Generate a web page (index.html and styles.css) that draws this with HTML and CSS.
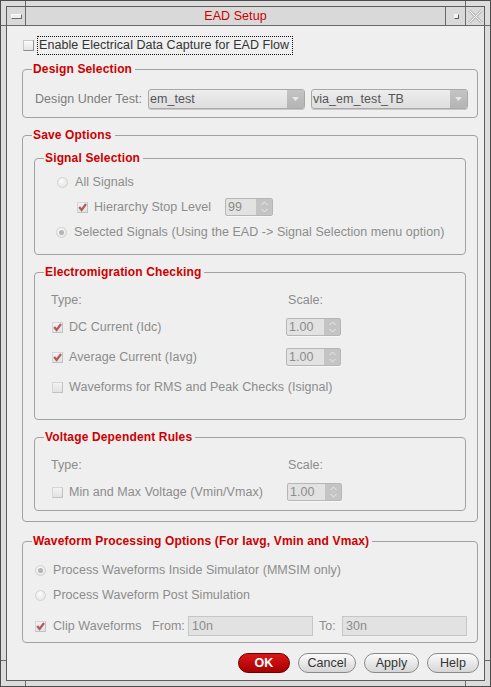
FILE: index.html
```html
<!DOCTYPE html>
<html>
<head>
<meta charset="utf-8">
<title>EAD Setup</title>
<link rel="stylesheet" href="styles.css">
</head>
<body>
<div class="win">
  <span class="notch notch-t1"></span><span class="notch notch-t2"></span>
  <span class="notch notch-b1"></span><span class="notch notch-b2"></span>
  <span class="notch notch-l1"></span><span class="notch notch-l2"></span>
  <span class="notch notch-r1"></span><span class="notch notch-r2"></span>
  <div class="inner">
    <div class="titlebar">
      <div class="tb-btn tb-menu"><span class="menu-bar"></span></div>
      <div class="tb-title">EAD Setup</div>
      <div class="tb-btn tb-min"><span class="min-sq"></span></div>
      <div class="tb-btn tb-close">
        <svg width="15" height="15" viewBox="0 0 15 15"><path d="M1.5 1.5 L13.5 13.5 M13.5 1.5 L1.5 13.5" stroke="#bdbdbd" stroke-width="3" fill="none"/><path d="M1.5 1.5 L13.5 13.5 M13.5 1.5 L1.5 13.5" stroke="#f4f4f4" stroke-width="1" fill="none"/></svg>
      </div>
    </div>
    <div class="content">
      <div class="enable-row">
        <span class="cb cb-on"></span>
        <span class="focus">Enable Electrical Data Capture for EAD Flow</span>
      </div>

      <fieldset class="group g-design">
        <legend>Design Selection</legend>
        <div class="design-row">
          <span class="lbl-dut">Design Under Test:</span>
          <span class="combo"><span class="combo-val">em_test</span><span class="combo-arr"><svg width="7" height="4" viewBox="0 0 7 4"><path d="M0 0 L7 0 L3.5 4 Z" fill="#e8e8e8"/></svg></span></span>
          <span class="combo"><span class="combo-val">via_em_test_TB</span><span class="combo-arr"><svg width="7" height="4" viewBox="0 0 7 4"><path d="M0 0 L7 0 L3.5 4 Z" fill="#e8e8e8"/></svg></span></span>
        </div>
      </fieldset>

      <fieldset class="group g-save">
        <legend>Save Options</legend>

        <fieldset class="subgroup g-signal">
          <legend>Signal Selection</legend>
          <div class="row sig-row1">
            <span class="radio"></span><span class="dis">All Signals</span>
          </div>
          <div class="row sig-row2">
            <span class="cb"><svg class="chk" width="11" height="11" viewBox="0 0 11 11"><path d="M2.2 5 L4.6 8 L9 2" stroke="#b45a5a" stroke-width="2.2" fill="none"/></svg></span>
            <span class="dis hier-lbl">Hierarchy Stop Level</span>
            <span class="spin spin-h"><span class="spin-val">99</span><span class="spin-arr"><svg width="9" height="14" viewBox="0 0 9 14"><path d="M1.5 5 L4.5 2 L7.5 5" stroke="#ececec" stroke-width="1" fill="none"/><path d="M1.5 9 L4.5 12 L7.5 9" stroke="#ececec" stroke-width="1" fill="none"/></svg></span></span>
          </div>
          <div class="row sig-row3">
            <span class="radio radio-on"></span><span class="dis">Selected Signals (Using the EAD -&gt; Signal Selection menu option)</span>
          </div>
        </fieldset>

        <fieldset class="subgroup g-em">
          <legend>Electromigration Checking</legend>
          <div class="row em-head">
            <span class="col1 dis">Type:</span><span class="dis scale-lbl">Scale:</span>
          </div>
          <div class="row em-r1">
            <span class="col1 cbcell"><span class="cb"><svg class="chk" width="11" height="11" viewBox="0 0 11 11"><path d="M2.2 5 L4.6 8 L9 2" stroke="#b45a5a" stroke-width="2.2" fill="none"/></svg></span><span class="dis">DC Current (Idc)</span></span>
            <span class="spin"><span class="spin-val">1.00</span><span class="spin-arr"><svg width="9" height="14" viewBox="0 0 9 14"><path d="M1.5 5 L4.5 2 L7.5 5" stroke="#ececec" stroke-width="1" fill="none"/><path d="M1.5 9 L4.5 12 L7.5 9" stroke="#ececec" stroke-width="1" fill="none"/></svg></span></span>
          </div>
          <div class="row em-r2">
            <span class="col1 cbcell"><span class="cb"><svg class="chk" width="11" height="11" viewBox="0 0 11 11"><path d="M2.2 5 L4.6 8 L9 2" stroke="#b45a5a" stroke-width="2.2" fill="none"/></svg></span><span class="dis">Average Current (Iavg)</span></span>
            <span class="spin"><span class="spin-val">1.00</span><span class="spin-arr"><svg width="9" height="14" viewBox="0 0 9 14"><path d="M1.5 5 L4.5 2 L7.5 5" stroke="#ececec" stroke-width="1" fill="none"/><path d="M1.5 9 L4.5 12 L7.5 9" stroke="#ececec" stroke-width="1" fill="none"/></svg></span></span>
          </div>
          <div class="row em-r3">
            <span class="col1 cbcell wide"><span class="cb"></span><span class="dis">Waveforms for RMS and Peak Checks (Isignal)</span></span>
          </div>
        </fieldset>

        <fieldset class="subgroup g-vdr">
          <legend>Voltage Dependent Rules</legend>
          <div class="row vdr-head">
            <span class="col1 dis">Type:</span><span class="dis scale-lbl">Scale:</span>
          </div>
          <div class="row vdr-r1">
            <span class="col1 cbcell"><span class="cb"></span><span class="dis">Min and Max Voltage (Vmin/Vmax)</span></span>
            <span class="spin spin-v"><span class="spin-val">1.00</span><span class="spin-arr"><svg width="9" height="14" viewBox="0 0 9 14"><path d="M1.5 5 L4.5 2 L7.5 5" stroke="#ececec" stroke-width="1" fill="none"/><path d="M1.5 9 L4.5 12 L7.5 9" stroke="#ececec" stroke-width="1" fill="none"/></svg></span></span>
          </div>
        </fieldset>
      </fieldset>

      <fieldset class="group g-wpo">
        <legend>Waveform Processing Options (For Iavg, Vmin and Vmax)</legend>
        <div class="row wpo-r1">
          <span class="radio radio-on"></span><span class="dis">Process Waveforms Inside Simulator (MMSIM only)</span>
        </div>
        <div class="row wpo-r2">
          <span class="radio"></span><span class="dis">Process Waveform Post Simulation</span>
        </div>
        <div class="row wpo-r3">
          <span class="cb"><svg class="chk" width="11" height="11" viewBox="0 0 11 11"><path d="M2.2 5 L4.6 8 L9 2" stroke="#b45a5a" stroke-width="2.2" fill="none"/></svg></span>
          <span class="dis clip-lbl">Clip Waveforms</span>
          <span class="dis from-lbl">From:</span>
          <span class="field">10n</span>
          <span class="dis to-lbl">To:</span>
          <span class="field">30n</span>
        </div>
      </fieldset>

      <div class="buttons">
        <span class="btn btn-ok">OK</span>
        <span class="btn btn-cancel">Cancel</span>
        <span class="btn btn-apply">Apply</span>
        <span class="btn btn-help">Help</span>
      </div>
    </div>
  </div>
</div>
</body>
</html>
```

FILE: styles.css
```css
* { box-sizing: border-box; }
html, body { margin: 0; padding: 0; background: #efefef; }
body {
  font-family: "Liberation Sans", Arial, Helvetica, sans-serif;
  font-size: 12.5px;
  letter-spacing: 0.05px;
  color: #333;
}

.win {
  position: relative;
  width: 491px;
  height: 687px;
  border: 1px solid #4c4c4c;
  background: #dcdcdc;
  padding: 5px;
}
.notch { position: absolute; background: #6a6a6a; }
.notch-t1 { left: 24px; top: 0; width: 1px; height: 5px; }
.notch-t2 { left: 464px; top: 0; width: 1px; height: 5px; }
.notch-b1 { left: 24px; bottom: 0; width: 1px; height: 5px; }
.notch-b2 { left: 464px; bottom: 0; width: 1px; height: 5px; }
.notch-l1 { left: 0; top: 24px; width: 5px; height: 1px; }
.notch-l2 { left: 0; top: 659px; width: 5px; height: 1px; }
.notch-r1 { right: 0; top: 24px; width: 5px; height: 1px; }
.notch-r2 { right: 0; top: 659px; width: 5px; height: 1px; }

.inner {
  height: 100%;
  border: 1px solid #5c5c5c;
  background: #efefef;
  display: flex;
  flex-direction: column;
}

/* title bar */
.titlebar {
  height: 19px;
  flex: none;
  display: flex;
  background: #d9d9d9;
  border-bottom: 1px solid #6a6a6a;
}
.tb-btn { display: flex; align-items: center; justify-content: center; height: 18px; }
.tb-menu { width: 19px; border-right: 1px solid #6a6a6a; }
.menu-bar {
  width: 11px; height: 5px;
  background: #efefef;
  border: 1px solid;
  border-color: #fafafa #6a6a6a #6a6a6a #fafafa;
}
.tb-title {
  flex: 1;
  text-align: center;
  color: #cc0000;
  line-height: 18px;
  font-size: 12.5px;
}
.tb-min { width: 20px; border-left: 1px solid #6a6a6a; }
.min-sq {
  width: 5px; height: 5px;
  background: #f2f2f2;
  border: 1px solid;
  border-color: #f8f8f8 #5a5a5a #5a5a5a #f8f8f8;
  margin-left: 1px;
}
.tb-close { width: 19px; border-left: 1px solid #6a6a6a; }

/* content */
.content {
  flex: 1;
  display: flex;
  flex-direction: column;
}

.enable-row {
  margin-top: 10px;
  height: 19px;
  display: flex;
  align-items: center;
  padding-left: 16px;
}
.focus {
  margin-left: 3px;
  height: 19px;
  line-height: 17px;
  border: 1px dotted #111;
  padding: 0 3px 0 1px;
  color: #333;
}

/* checkbox / radio */
.cb {
  flex: none;
  position: relative;
  width: 11px;
  height: 11px;
  border: 1px solid;
  border-color: #d6d6d6 #c2c2c2 #c2c2c2 #d6d6d6;
  background: linear-gradient(#f2f2f2, #e2e2e2);
}
.cb-on {
  border-color: #c8c8c8 #8e8e8e #8e8e8e #c8c8c8;
  background: linear-gradient(#fbfbfb, #e4e4e4);
}
.chk { position: absolute; left: -1px; top: -1px; }

.radio {
  flex: none;
  position: relative;
  width: 11px;
  height: 11px;
  border-radius: 50%;
  border: 1px solid #d2d2d2;
  background: radial-gradient(circle at 40% 35%, #fbfbfb, #e0e0e0);
}
.radio-on::after {
  content: "";
  position: absolute;
  left: 2px; top: 2px;
  width: 5px; height: 5px;
  border-radius: 50%;
  background: #b4b4b4;
}

.dis { color: #8c8c8c; white-space: nowrap; }

/* group boxes */
fieldset { margin: 0; min-width: 0; }
legend {
  font-weight: bold;
  font-size: 12px;
  letter-spacing: 0.15px;
  line-height: 14px;
  color: #cc0000;
  padding: 0 3px 0 1px;
  margin-left: 9px;
}
.group {
  border: 1px solid #a2a2a2;
  border-radius: 4px;
  margin: 0 6px 0 15px;
  padding: 0;
}
.subgroup {
  border: 1px solid #a2a2a2;
  border-radius: 4px;
  margin: 0 11px 0 11px;
  padding: 0;
}

.row { display: flex; align-items: center; height: 20px; }

/* design */
.g-design { margin-top: 7px; padding: 12px 9px 8px 12px; }
.g-design > legend { margin-left: -3px; }
.design-row { display: flex; align-items: center; height: 21px; }
.lbl-dut { flex: 1; color: #7c7c7c; white-space: nowrap; }
.combo {
  display: flex;
  width: 158px;
  height: 20px;
  margin-left: 6px;
  border: 1px solid #a8a8a8;
  border-radius: 3px;
  background: linear-gradient(#ededed, #dedede);
  box-shadow: 0 1px 0 #c8c8c8;
  overflow: hidden;
}
.combo-val { flex: 1; padding-left: 1px; line-height: 18px; color: #555; }
.combo-arr {
  width: 17px;
  display: flex; align-items: center; justify-content: center;
  background: linear-gradient(#c4c4c4, #b4b4b4);
}

/* save options */
.g-save { margin-top: 10px; padding: 0 0 10px 0; }
.g-signal { margin-top: 9px; padding: 7px 0 12px 0; }
.sig-row1 { padding-left: 22px; }
.sig-row1 .radio, .sig-row3 .radio { margin-right: 7px; }
.sig-row2 { margin-top: 5px; padding-left: 42px; }
.sig-row2 .cb { margin-right: 6px; }
.hier-lbl { width: 131px; }
.sig-row3 { margin-top: 5px; padding-left: 21px; }

.spin {
  display: flex;
  width: 55px;
  height: 18px;
  border: 1px solid #b6b6b6;
  border-radius: 2px;
  background: #e2e2e2;
  box-shadow: 0 1px 0 #f8f8f8;
  overflow: hidden;
}
.spin-h { width: 48px; }
.spin-val { flex: 1; padding-left: 2px; line-height: 16px; color: #8c8c8c; }
.spin-arr {
  width: 16px;
  display: flex; align-items: center; justify-content: center;
  background: #c4c4c4;
}

.g-em { margin-top: 10px; padding: 11px 0 22px 16px; }
.g-em > legend, .g-vdr > legend { margin-left: -7px; }
.col1 { width: 235px; flex: none; }
.cbcell { display: flex; align-items: center; }
.cbcell .cb { margin-left: 1px; margin-right: 6px; }
.cbcell.wide { width: auto; }
.scale-lbl { margin-left: 2px; }
.em-r1 { margin-top: 7px; }
.em-r2 { margin-top: 10px; }
.em-r3 { margin-top: 10px; }

.g-vdr { margin-top: 10px; padding: 11px 0 8px 16px; }
.vdr-r1 { margin-top: 7px; }
.spin-v { margin-left: 1px; }

/* waveform processing */
.g-wpo { margin-top: 12px; padding: 12px 0 6px 12px; }
.g-wpo > legend { margin-left: -3px; }
.wpo-r1 .radio, .wpo-r2 .radio { margin-right: 7px; }
.wpo-r2 { margin-top: 5px; }
.wpo-r3 { margin-top: 11px; }
.wpo-r3 .cb { margin-right: 7px; }
.clip-lbl { width: 99px; }
.from-lbl { width: 36px; }
.to-lbl { width: 23px; margin-left: 6px; }
.field {
  width: 125px;
  height: 20px;
  border: 1px solid #c6c6c6;
  background: #e2e2e2;
  color: #8c8c8c;
  padding-left: 3px;
  line-height: 18px;
}

/* buttons */
.buttons {
  margin-top: 10px;
  display: flex;
  justify-content: flex-end;
  gap: 8px;
  padding-right: 5px;
}
.btn {
  height: 20px;
  line-height: 18px;
  text-align: center;
  border-radius: 10px;
  border: 1px solid #8a8a8a;
  background: linear-gradient(#fbfbfb, #d6d6d6);
  color: #333;
}
.btn-ok {
  width: 52px;
  border-color: #6e0000;
  background: linear-gradient(#d81818, #a80000);
  color: #fff;
  font-weight: bold;
}
.btn-cancel { width: 58px; }
.btn-apply { width: 55px; }
.btn-help { width: 52px; }
```
